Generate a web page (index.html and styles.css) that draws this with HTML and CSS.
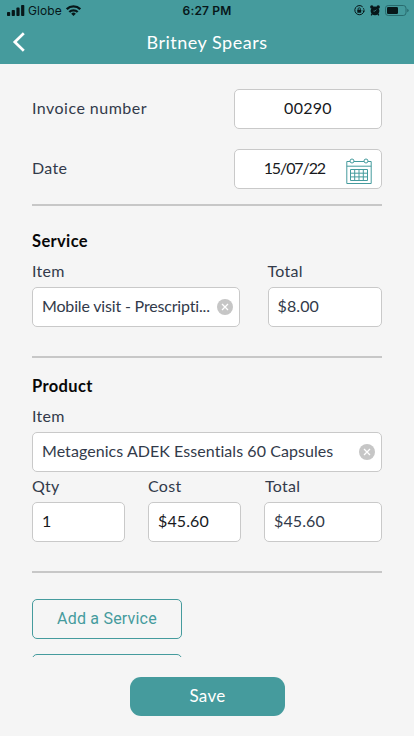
FILE: index.html
```html
<!DOCTYPE html>
<html lang="en">
<head>
<meta charset="utf-8">
<meta name="viewport" content="width=device-width, initial-scale=1">
<title>Invoice</title>
<link rel="stylesheet" href="styles.css">
</head>
<body>
<div class="screen">
  <header class="header">
    <div class="status">
      <div class="status-left">
        <svg class="signal" width="18" height="11" viewBox="0 0 18 11"><rect x="0" y="7" width="3.2" height="4" rx=".8"/><rect x="4.7" y="5" width="3.2" height="6" rx=".8"/><rect x="9.4" y="2.6" width="3.2" height="8.4" rx=".8"/><rect x="14.1" y="0" width="3.2" height="11" rx=".8"/></svg>
        <span class="carrier">Globe</span>
        <svg class="wifi" width="15" height="11" viewBox="0 0 15 11" fill="none" stroke="#071719" stroke-width="2.3"><path d="M.8 4.2a9.5 9.5 0 0 1 13.4 0"/><path d="M3.3 7a6 6 0 0 1 8.4 0"/><path d="M7.5 11 5.2 8.7a3.3 3.3 0 0 1 4.6 0z" fill="#071719" stroke="none"/></svg>
      </div>
      <span class="time">6:27 PM</span>
      <div class="status-right">
        <svg width="11" height="11" viewBox="0 0 11 11"><path d="M8.7 1.9A4.6 4.6 0 1 0 10 5.8M9.4 3.2a4.6 4.6 0 0 1 .6 1.5" fill="none" stroke="#071719" stroke-width="1"/><path d="m8.3 5.6 2.7 0-1.3 1.8z"/><rect x="3.3" y="4.8" width="3.9" height="3" rx=".5"/><path d="M4.1 5V3.9a1.15 1.15 0 0 1 2.3 0V5" fill="none" stroke="#071719" stroke-width=".8"/></svg>
        <svg width="10" height="11" viewBox="0 0 10 11"><circle cx="5" cy="5.8" r="4.4"/><circle cx="1.8" cy="2" r="1.7"/><circle cx="8.2" cy="2" r="1.7"/><path d="m2.3 8.6-1.1 1.7M7.7 8.6l1.1 1.7" stroke="#071719" stroke-width="1.3"/><path d="M5 6.1H3.4M5 6.1l1.4-1.5" fill="none" stroke="#459b9d" stroke-width=".7"/></svg>
        <svg width="24" height="11" viewBox="0 0 24 11"><rect x=".5" y=".5" width="20.5" height="10" rx="2.7" fill="none" stroke="#286b6e"/><rect x="2" y="2" width="11" height="7" rx="1.3"/><path d="M22.2 3.8q1.5.5 1.5 1.7t-1.5 1.7z" fill="#286b6e"/></svg>
      </div>
    </div>
    <div class="nav">
      <svg class="back" width="14" height="22" viewBox="0 0 14 22"><path d="M11.8 2.3 2.8 11l9 8.7" fill="none" stroke="#fff" stroke-width="2.7"/></svg>
      <h1 class="title">Britney Spears</h1>
    </div>
  </header>

  <main class="content">
    <div class="row">
      <span class="label invoice">Invoice number</span>
      <div class="field center dark"><span>00290</span></div>
    </div>
    <div class="row">
      <span class="label">Date</span>
      <div class="field center dark date"><span class="date-value">15/07/22</span>
        <svg class="calendar" width="26" height="27" viewBox="0 0 26 27" fill="none" stroke="#459b9d"><path d="M4 3.5H.8v22h24.4v-22H22M8 3.5h10M.8 8.2h24.4"/><circle cx="6" cy="3" r="2"/><circle cx="20" cy="3" r="2"/><path d="M4.5 11.5h17v11h-17zM4.5 15.2h17M4.5 18.9h17M8.7 11.5v11M13 11.5v11M17.3 11.5v11"/></svg>
      </div>
    </div>
    <hr class="divider first">

    <section>
      <h2>Service</h2>
      <div class="service-grid">
        <div><span class="label">Item</span>
          <div class="field"><span class="visit">Mobile visit - Prescripti...</span><svg class="clear" width="16" height="16" viewBox="0 0 16 16"><circle cx="8" cy="8" r="8" fill="#c6c6c6"/><path d="m5 5 6 6M11 5l-6 6" stroke="#fff" stroke-width="1.3"/></svg></div>
        </div>
        <div><span class="label">Total</span><div class="field"><span>$8.00</span></div></div>
      </div>
    </section>
    <hr class="divider">

    <section>
      <h2>Product</h2>
      <span class="label">Item</span>
      <div class="field"><span class="supplement">Metagenics ADEK Essentials 60 Capsules</span><svg class="clear" width="16" height="16" viewBox="0 0 16 16"><circle cx="8" cy="8" r="8" fill="#c6c6c6"/><path d="m5 5 6 6M11 5l-6 6" stroke="#fff" stroke-width="1.3"/></svg></div>
      <div class="product-grid">
        <div><span class="label">Qty</span><div class="field dark"><span>1</span></div></div>
        <div><span class="label">Cost</span><div class="field dark"><span>$45.60</span></div></div>
        <div><span class="label total">Total</span><div class="field"><span>$45.60</span></div></div>
      </div>
    </section>
    <hr class="divider">

    <div class="actions">
      <button class="outline">Add a Service</button>
      <button class="outline" aria-label="Add"></button>
    </div>
  </main>

  <footer class="footer"><button class="save">Save</button></footer>
</div>
</body>
</html>
```
FILE: styles.css
```css
* { box-sizing: border-box; }
body { margin: 0; background: #f5f5f5; font-family: Lato, "Liberation Sans", sans-serif; font-size: 16px; color: #323a4a; }
.screen { height: 736px; display: flex; flex-direction: column; overflow: hidden; }
.header { height: 64px; flex: none; background: #459b9d; color: #fff; }
.status { height: 20px; display: grid; grid-template-columns: 1fr auto 1fr; align-items: center; padding: 1px 7px 0 7px; color: #071719; fill: #071719; font-family: Inter, sans-serif; font-size: 12px; line-height: 20px; }
.status-left, .status-right { display: flex; align-items: center; }
.status-left svg { margin-top: -2px; }
.status-right svg { margin-top: -2px; }
.carrier { margin-left: 3px; letter-spacing: .1px; }
.status .wifi { margin-left: 4px; }
.time { font-weight: 600; letter-spacing: .15px; }
.status-right { justify-content: flex-end; gap: 5px; margin-right: -2px; }
.nav { height: 44px; display: grid; grid-template-columns: 40px 1fr 40px; align-items: center; }
.back { margin-left: 12px; }
.title { margin: 0; text-align: center; font-size: 18px; font-weight: 400; line-height: 42px; letter-spacing: .5px; }
.content { height: 593px; flex: none; overflow: hidden; padding: 25px 32px 0; }
.row { display: grid; grid-template-columns: 1fr 148px; align-items: center; margin-bottom: 20px; }
.label { display: block; height: 30px; line-height: 28px; letter-spacing: .3px; }
.invoice { letter-spacing: .47px; }
.field { height: 40px; display: flex; align-items: center; justify-content: space-between; padding: 0 6px 0 9px; background: #fff; border: 1px solid #c9c9c9; border-radius: 5px; white-space: nowrap; letter-spacing: .1px; }
.field span { padding-bottom: 3px; }
.field svg { flex: none; }
.visit { letter-spacing: -.17px; }
.supplement { letter-spacing: .06px; }
.dark { color: #17191d; }
.center { justify-content: center; padding: 0; letter-spacing: .3px; }
.date { justify-content: flex-end; gap: 21px; padding-right: 9px; }
.date-value { letter-spacing: -1.1px; }
.calendar { margin-top: 4px; }
.divider { height: 2px; margin: 29px 0 14px; border: 0; background: #c7c7c7; }
.divider.first { margin: -5px 0 21px; }
h2 { margin: 0; height: 30px; font-size: 16.5px; font-weight: 700; line-height: 28px; color: #080808; letter-spacing: .35px; }
.service-grid { display: grid; grid-template-columns: 208px 114.5px; justify-content: space-between; }
.product-grid { display: grid; grid-template-columns: 93px 93px 118px; column-gap: 23px; }
.total { padding-left: 1px; }
.actions { display: flex; flex-direction: column; gap: 15px; padding-top: 12px; }
.outline { width: 150px; height: 40px; flex: none; padding: 0; background: transparent; border: 1px solid #459b9d; border-radius: 5px; color: #459b9d; font: 16px/38px Roboto, sans-serif; letter-spacing: .2px; }
.footer { flex: 1; display: flex; justify-content: center; align-items: flex-start; padding: 20px 0 0 1px; }
.save { width: 155px; height: 39px; border: 0; border-radius: 11px; padding: 0 0 2px; background: #459b9d; color: #fff; font: 17px Lato, sans-serif; letter-spacing: .3px; }
```
